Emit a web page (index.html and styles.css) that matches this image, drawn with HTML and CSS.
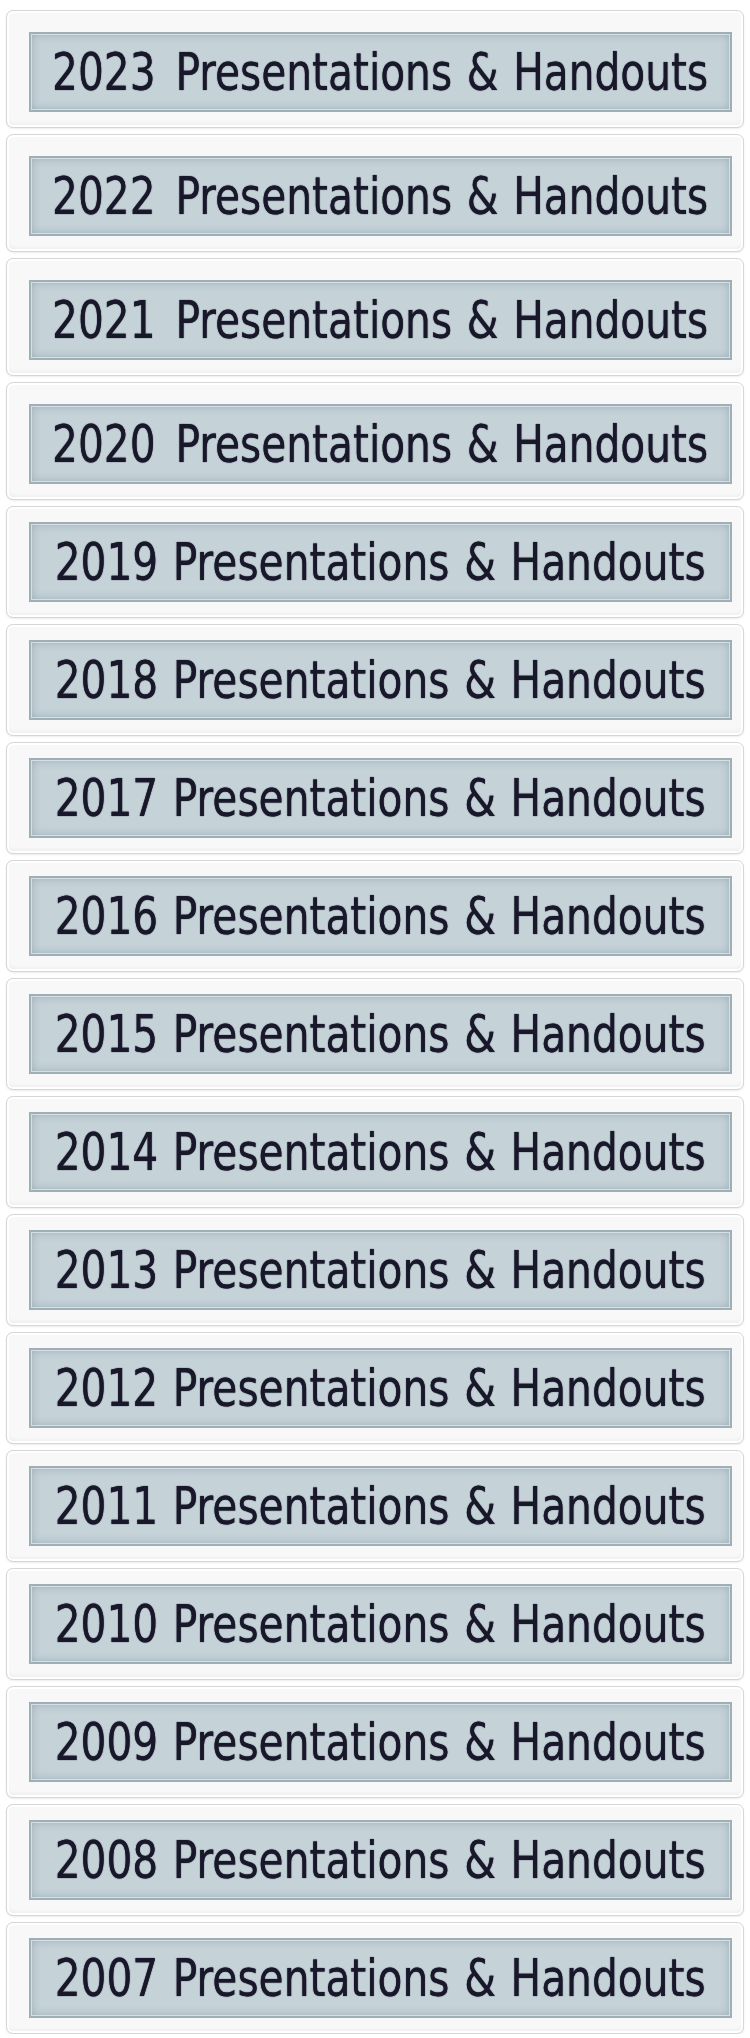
FILE: index.html
```html
<!DOCTYPE html>
<html lang="en">
<head>
    <meta charset="UTF-8">
    <meta name="viewport" content="width=device-width, initial-scale=1.0">
    <title>Presentations &amp; Handouts</title>
    <link rel="stylesheet" href="styles.css">
</head>
<body>
    <div class="archive">
        <a class="card card-wide" href="#"><span class="panel"><span class="label"><span class="year">2023</span> Presentations &amp; Handouts</span></span></a>
        <a class="card card-wide" href="#"><span class="panel"><span class="label"><span class="year">2022</span> Presentations &amp; Handouts</span></span></a>
        <a class="card card-wide" href="#"><span class="panel"><span class="label"><span class="year">2021</span> Presentations &amp; Handouts</span></span></a>
        <a class="card card-wide" href="#"><span class="panel"><span class="label"><span class="year">2020</span> Presentations &amp; Handouts</span></span></a>
        <a class="card" href="#"><span class="panel"><span class="label"><span class="year">2019</span> Presentations &amp; Handouts</span></span></a>
        <a class="card" href="#"><span class="panel"><span class="label"><span class="year">2018</span> Presentations &amp; Handouts</span></span></a>
        <a class="card" href="#"><span class="panel"><span class="label"><span class="year">2017</span> Presentations &amp; Handouts</span></span></a>
        <a class="card" href="#"><span class="panel"><span class="label"><span class="year">2016</span> Presentations &amp; Handouts</span></span></a>
        <a class="card" href="#"><span class="panel"><span class="label"><span class="year">2015</span> Presentations &amp; Handouts</span></span></a>
        <a class="card" href="#"><span class="panel"><span class="label"><span class="year">2014</span> Presentations &amp; Handouts</span></span></a>
        <a class="card" href="#"><span class="panel"><span class="label"><span class="year">2013</span> Presentations &amp; Handouts</span></span></a>
        <a class="card" href="#"><span class="panel"><span class="label"><span class="year">2012</span> Presentations &amp; Handouts</span></span></a>
        <a class="card" href="#"><span class="panel"><span class="label"><span class="year">2011</span> Presentations &amp; Handouts</span></span></a>
        <a class="card" href="#"><span class="panel"><span class="label"><span class="year">2010</span> Presentations &amp; Handouts</span></span></a>
        <a class="card" href="#"><span class="panel"><span class="label"><span class="year">2009</span> Presentations &amp; Handouts</span></span></a>
        <a class="card" href="#"><span class="panel"><span class="label"><span class="year">2008</span> Presentations &amp; Handouts</span></span></a>
        <a class="card" href="#"><span class="panel"><span class="label"><span class="year">2007</span> Presentations &amp; Handouts</span></span></a>
    </div>
</body>
</html>
```

FILE: styles.css
```css
body {
    margin: 0;
    background: #fff;
    font-family: "DejaVu Sans Condensed", "DejaVu Sans", sans-serif;
}
.archive {
    display: flex;
    flex-direction: column;
    gap: 6px;
    padding: 10px 6px 0;
}
.card {
    display: block;
    height: 112px;
    box-sizing: border-box;
    padding: 15px 11px 15px 22px;
    background: #f8f8f8;
    border: 1px solid #d6d6d6;
    border-radius: 7px;
    box-shadow: inset 0 0 0 2px #fff, inset 0 -3px 4px rgba(0,0,0,0.05), 0 1px 2px rgba(0,0,0,0.08);
    text-decoration: none;
}
/* newer years sit in slightly taller frames */
.card-wide {
    height: 118px;
    padding-top: 21px;
}
.panel {
    display: flex;
    align-items: center;
    justify-content: center;
    height: 80px;
    box-sizing: border-box;
    overflow: hidden;
    background: #c5d2d8;
    border: 2px solid #9fafb6;
    box-shadow: inset 0 0 0 1px #d6e0e4, inset 0 0 10px rgba(70,95,108,0.35);
}
.label {
    display: inline-block;
    flex-shrink: 0;
    color: #18182a;
    font-size: 52px;
    line-height: 1;
    word-spacing: 2px;
    white-space: nowrap;
    text-shadow: 0 0 1px rgba(20,20,40,0.8), 0 0 1px rgba(20,20,40,0.5);
    transform: scaleX(0.87);
}
.card-wide .year {
    margin-right: 6px;
}
```
